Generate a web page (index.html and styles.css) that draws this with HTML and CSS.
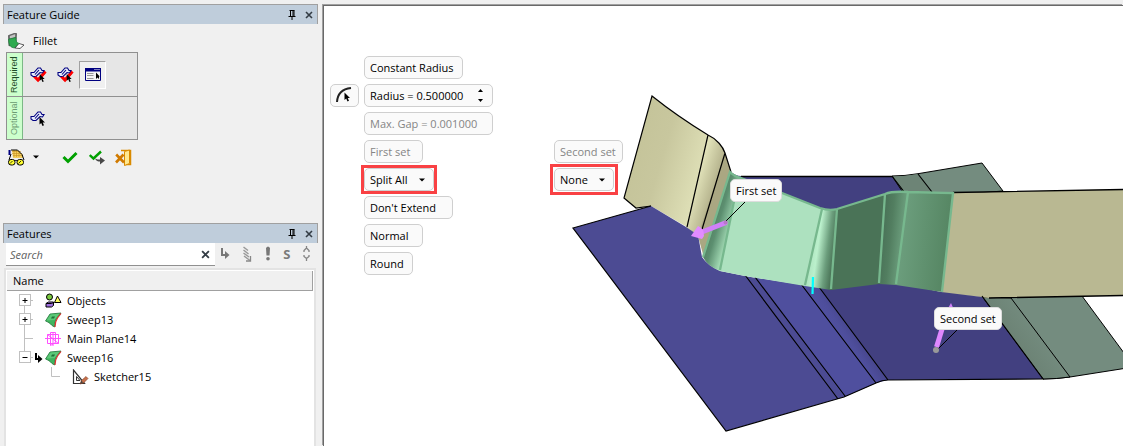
FILE: index.html
```html
<!DOCTYPE html>
<html lang="en">
<head>
<meta charset="utf-8">
<title>Feature Guide</title>
<link rel="stylesheet" href="styles.css">
</head>
<body>
<svg class="defs" aria-hidden="true">
  <symbol id="pin" viewBox="0 0 8 10"><path d="M1.5 0.5H6.500M2.500 0.500V6M5 0.500V6M6 0.500V6M0.500 6.500H7.500M4 7V10" fill="none" stroke="#000"/></symbol>
  <symbol id="cross" viewBox="0 0 8 8"><path d="M1 1L7 7M7 1L1 7" fill="none" stroke="#333c44" stroke-width="1.600"/></symbol>
  <symbol id="caret" viewBox="0 0 6 4"><path d="M0 0.500H6L3 3.500Z" fill="#000"/></symbol>
  <symbol id="face" viewBox="0 0 15 15">
    <path d="M1 6.500H4L8 2H10.500L12 4.500H14L12.500 7L10 6.500L6 10.500H3L1 9ZM5 8.500L9 4" fill="#e8ecfa" stroke="#000080" stroke-width="1.100"/>
  </symbol>
  <symbol id="pick" viewBox="0 0 6 9"><path d="M0.500 0V7.500L2.200 6L3.500 9L5 8.300L3.700 5.500H6Z" fill="#000"/></symbol>
  <symbol id="sweep" viewBox="0 0 17 16">
    <path d="M0.500 9L5 2L16 1L12 6C10 9 9.500 11 9.500 15L7 13.500C5 11 3 10 0.500 9Z" fill="#3fb45e" stroke="#1f7438" stroke-width="0.800"/>
    <path d="M1.500 8.500L5.500 2.600L14.500 1.800L9.500 8Z" fill="#5cc878"/>
    <path d="M7 4.500H10L9 6.500H6Z" fill="#1f7038"/>
    <path d="M16 1.500L12.500 6C10.500 9 10 11 10 15" fill="none" stroke="#e03030" stroke-width="1.200"/>
  </symbol>
</svg>
<div class="app">
  <aside class="sidebar">
    <section class="panel guide">
      <header class="panel-head">
        <h2>Feature Guide</h2>
        <button class="bare" aria-label="Pin"><svg width="8" height="10"><use href="#pin"/></svg></button>
        <button class="bare" aria-label="Close"><svg width="8" height="8"><use href="#cross"/></svg></button>
      </header>
      <div class="feature">
        <svg width="17" height="16" viewBox="0 0 17 16"><path d="M0.500 2.500L6 0.500L8.500 0.500L8 9L1 13Z" fill="#777" stroke="#444" stroke-width="0.700"/><path d="M2 3L7 1.200V4L2 6Z" fill="#c4c4c4"/><path d="M0.700 6L8 4.500C7.800 8 8.500 9.500 11 10.500L7 15C2 14.500 0.500 12 0.700 6Z" fill="#2faa4f" stroke="#1b7636" stroke-width="0.700"/><path d="M11 10.500L16 12L12 15.500L7 15Z" fill="#fff" stroke="#333" stroke-width="0.800"/></svg>
        <span>Fillet</span>
      </div>
      <div class="toolbox">
        <div class="tool-row">
          <div class="tool-label">Required</div>
          <button class="tool" aria-label="First set"><svg width="17" height="17" viewBox="0 0 17 17"><path d="M4 10L8 14L15.500 5.500" fill="none" stroke="#f00" stroke-width="3"/><use href="#face" width="15" height="15"/><path d="M5 11L8 14L14 7.500" fill="none" stroke="#f00" stroke-width="2"/><use href="#pick" x="9" y="8" width="6" height="8"/></svg></button>
          <button class="tool" aria-label="Second set"><svg width="17" height="17" viewBox="0 0 17 17"><path d="M4 10L8 14L15.500 5.500" fill="none" stroke="#f00" stroke-width="3"/><use href="#face" width="15" height="15"/><path d="M5 11L8 14L14 7.500" fill="none" stroke="#f00" stroke-width="2"/><use href="#pick" x="9" y="8" width="6" height="8"/></svg></button>
          <button class="tool pressed" aria-label="Options"><svg width="16" height="14" viewBox="0 0 16 14"><path d="M0.500 0.500H15.500V12.500H0.500Z" fill="#f4f4f4" stroke="#000080"/><path d="M0 0H16V3.500H0Z" fill="#000080"/><path d="M9.500 1.500H10.500M11.500 1.500H12.500M13.500 1.500H14.500" stroke="#fff"/><path d="M2 5.500H8.500M2 7.500H8.500M2 10.500H8.500" stroke="#999"/><path d="M11 4.500V11L12.500 9.500L14 11V8.500H14.800Z" fill="#000"/></svg></button>
        </div>
        <div class="tool-row optional">
          <div class="tool-label">Optional</div>
          <button class="tool" aria-label="Optional faces"><svg width="17" height="17" viewBox="0 0 17 17"><use href="#face" width="15" height="15"/><use href="#pick" x="9" y="7" width="6" height="9"/></svg></button>
        </div>
      </div>
      <div class="actions">
        <button class="bare" aria-label="Preview"><svg width="17" height="17" viewBox="0 0 17 17"><path d="M4 1H9L15 6V9H5Z" fill="#f5d060"/><path d="M4 2.500H13M4 4.500H14M5 6.500H15M6 1V8M8.500 1V8M11 2V8" stroke="#c89020" stroke-width="0.600"/><path d="M1.500 1V6" stroke="#000080" stroke-width="2"/><path d="M3 1H9.500L14 5.500L16 11M3 5L1 11" fill="none" stroke="#000"/><rect x="0.500" y="10.500" width="6.500" height="5.500" rx="2.500" fill="#ffff30" stroke="#000"/><rect x="9" y="10.500" width="6.500" height="5.500" rx="2.500" fill="#ffff30" stroke="#000"/><path d="M7 12L8 11L9 12M2 14.500L4.500 12M10.500 14.500L13 12" fill="none" stroke="#000" stroke-width="0.800"/></svg></button>
        <button class="bare drop" aria-label="Preview options"><svg width="6" height="4"><use href="#caret"/></svg></button>
        <button class="bare ok" aria-label="OK"><svg width="16" height="13" viewBox="0 0 16 13"><path d="M1.500 6L6 10.500L14.500 2" fill="none" stroke="#00a000" stroke-width="3"/></svg></button>
        <button class="bare" aria-label="Apply"><svg width="16" height="15" viewBox="0 0 16 15"><path d="M0.800 5L4.500 8.500L12 1.500" fill="none" stroke="#00a000" stroke-width="2.400"/><path d="M6 8.500C7 11 9 11.500 11 11.500V14.500L16 10.500L11 7V9.500C9 9.500 8 9.500 6 8.500Z" fill="#484848"/></svg></button>
        <button class="bare" aria-label="Cancel"><svg width="17" height="17" viewBox="0 0 17 17"><path d="M6 1.500H15.500V15.500H9" fill="none" stroke="#d98a00" stroke-width="1.500"/><path d="M9.500 2.500L14.500 1V14.500L9.500 16.500Z" fill="#ffe890" stroke="#d98a00"/><path d="M1.200 5.500L9 13.500M8.500 5.500L1 13.500" stroke="#d07a00" stroke-width="2.600"/></svg></button>
      </div>
    </section>

    <section class="panel features">
      <header class="panel-head">
        <h2>Features</h2>
        <button class="bare" aria-label="Pin"><svg width="8" height="10"><use href="#pin"/></svg></button>
        <button class="bare" aria-label="Close"><svg width="8" height="8"><use href="#cross"/></svg></button>
      </header>
      <div class="search-row">
        <div class="search">
          <input type="text" placeholder="Search" aria-label="Search features">
          <button class="bare" aria-label="Clear search"><svg width="9" height="9" viewBox="0 0 8 8"><use href="#cross"/></svg></button>
        </div>
        <div class="filters">
          <button class="bare" aria-label="Dependents"><svg width="10" height="13" viewBox="0 0 10 13"><path d="M2 1V8H6" fill="none" stroke="#777" stroke-width="2"/><path d="M5 4L9.500 8L5 12Z" fill="#777"/></svg></button>
          <button class="bare" aria-label="Order"><svg width="10" height="16" viewBox="0 0 10 16"><path d="M1.500 1L6 4.500M1.500 4L6.500 8M1.500 7L7 11M2 10L8 14.500" stroke="#999" stroke-width="1.500"/><path d="M8.500 10V15H4" fill="none" stroke="#888" stroke-width="1.300"/></svg></button>
          <button class="bare" aria-label="Warnings"><svg width="6" height="15" viewBox="0 0 6 15"><path d="M1 2Q3 -1 5 2L4.500 9.500H1.500Z" fill="#777"/><circle cx="3" cy="12.800" r="1.800" fill="#777"/></svg></button>
          <button class="bare letter" aria-label="Suppressed">S</button>
          <button class="bare" aria-label="Expand"><svg width="7" height="15" viewBox="0 0 7 15"><path d="M3.500 0V2M1 6V4.500L3.500 2L6 4.500V6M3.500 15V12.500M1 9V10.500L3.500 12.500L6 10.500V9" fill="none" stroke="#858585" stroke-width="1.300"/></svg></button>
        </div>
      </div>
      <div class="list">
        <div class="list-head">Name</div>
        <ul class="tree">
          <li class="row"><svg class="guide-line" width="38" height="19"><path d="M5.500 12V19M11 9.500H14" stroke="#c0c0c0"/><rect x="0.500" y="3.500" width="11" height="11" fill="#fff" stroke="#c0c0c0"/><path d="M3.500 9.500H8.500M6 7V12" stroke="#000"/></svg>
            <svg width="17" height="16" viewBox="0 0 17 16"><circle cx="4.500" cy="4" r="3" fill="#79c940" stroke="#000"/><path d="M12.500 3L16 9.500H9.500Z" fill="#ffff60" stroke="#000"/><path d="M1 10.500L3.500 9H8.500V12.500L6.500 14H1Z" fill="#a070e0" stroke="#000"/><path d="M1 10.500H6.500L8.500 9.500" fill="none" stroke="#000"/></svg><span>Objects</span></li>
          <li class="row"><svg class="guide-line" width="38" height="19"><path d="M5.500 0V19M11 9.500H14" stroke="#c0c0c0"/><rect x="0.500" y="3.500" width="11" height="11" fill="#fff" stroke="#c0c0c0"/><path d="M3.500 9.500H8.500M6 7V12" stroke="#000"/></svg>
            <svg width="17" height="16"><use href="#sweep"/></svg><span>Sweep13</span></li>
          <li class="row"><svg class="guide-line" width="38" height="19"><path d="M5.500 0V19M5.500 9.500H14" fill="none" stroke="#c0c0c0"/></svg>
            <svg width="17" height="16" viewBox="0 0 17 16"><path d="M2.500 3.500H13.500V12.500H2.500ZM5.500 1.500V14.500L10.500 11.500V1.500ZM0 7.500H16M8 1V15M2.500 3.500L13.500 12.500" fill="none" stroke="#ff50ff"/></svg><span>Main Plane14</span></li>
          <li class="row"><svg class="guide-line" width="38" height="19"><path d="M5.500 0V9M11 9.500H14" stroke="#c0c0c0"/><rect x="0.500" y="3.500" width="11" height="11" fill="#fff" stroke="#c0c0c0"/><path d="M3.500 9.500H8.500" stroke="#000"/><path d="M17 5V11H20" fill="none" stroke="#000" stroke-width="2"/><path d="M19 7L23.500 11L19 15Z" fill="#000"/></svg>
            <svg width="17" height="16"><use href="#sweep"/></svg><span>Sweep16</span></li>
          <li class="row"><svg class="guide-line" width="65" height="19"><path d="M32.500 0V9.500H41" fill="none" stroke="#c0c0c0"/></svg>
            <svg width="17" height="16" viewBox="0 0 17 16"><path d="M1.500 1V14.500H12.500Z" fill="#fff" stroke="#333" stroke-width="1.200"/><path d="M4.500 7.500V11.500H8Z" fill="none" stroke="#333"/><path d="M8 15L9.500 11.500L14 7.500L16 9.500L11.500 14Z" fill="#c8704a" stroke="#7a3a20" stroke-width="0.600"/><path d="M8 15L9.500 11.500L11 13.500Z" fill="#444"/></svg><span>Sketcher15</span></li>
        </ul>
      </div>
    </section>
  </aside>

  <main class="viewport">
    <svg class="scene" width="799" height="440" viewBox="324 6 799 440" role="img" aria-label="Fillet preview model">
      <defs>
        <linearGradient id="tanA" gradientUnits="userSpaceOnUse" x1="635" y1="150" x2="702" y2="170"><stop offset="0" stop-color="#c5c49a"/><stop offset="0.400" stop-color="#c8c79e"/><stop offset="1" stop-color="#dedfb6"/></linearGradient>
        <linearGradient id="tanB" gradientUnits="userSpaceOnUse" x1="694" y1="190" x2="717" y2="197"><stop offset="0" stop-color="#e0e1b8"/><stop offset="1" stop-color="#aaa782"/></linearGradient>
        <linearGradient id="blueFold" gradientUnits="userSpaceOnUse" x1="830" y1="325" x2="851" y2="311"><stop offset="0" stop-color="#5050a0"/><stop offset="0.300" stop-color="#4e4e9c"/><stop offset="1" stop-color="#424080"/></linearGradient>
        <linearGradient id="g1" gradientUnits="userSpaceOnUse" x1="714" y1="220" x2="731" y2="225"><stop offset="0" stop-color="#558466"/><stop offset="0.300" stop-color="#5c8f70"/><stop offset="1" stop-color="#a0d8b2"/></linearGradient>
        <linearGradient id="g3" gradientUnits="userSpaceOnUse" x1="812" y1="248" x2="834" y2="251"><stop offset="0" stop-color="#b0e6c2"/><stop offset="0.250" stop-color="#bbf0cc"/><stop offset="0.700" stop-color="#6b9d7c"/><stop offset="1" stop-color="#4c7659"/></linearGradient>
        <linearGradient id="g5" gradientUnits="userSpaceOnUse" x1="882" y1="240" x2="902" y2="242"><stop offset="0" stop-color="#4a7358"/><stop offset="0.400" stop-color="#527e60"/><stop offset="1" stop-color="#6b9d7c"/></linearGradient>
        <linearGradient id="g6" gradientUnits="userSpaceOnUse" x1="902" y1="240" x2="948" y2="245"><stop offset="0" stop-color="#6b9d7c"/><stop offset="1" stop-color="#568663"/></linearGradient>
        <linearGradient id="gray" gradientUnits="userSpaceOnUse" x1="1010" y1="350" x2="1040" y2="328"><stop offset="0" stop-color="#6a8072"/><stop offset="1" stop-color="#748c7f"/></linearGradient>
      </defs>
      <path d="M652 96C672 112 690 124 708 135L687 227L651 206L636 208L624 198Z" fill="url(#tanA)"/>
      <path d="M708 135C717 139 723 147 725 153L702 230L698 236L686 228Z" fill="url(#tanB)"/>
      <path d="M725 153L731 172L704 258L698 236Z" fill="#aaa782"/>
      <path d="M651 206L636 208L624 198L652 96C672 112 690 124 708 135C717 139 723 147 725 153L731 172M708 135L687 227M725 153L700 236" fill="none" stroke="#000" stroke-width="1.200"/>
      <path d="M731 172Q736 176 741 176H892L905 194L885 200L830 220L735 190Z" fill="#424080"/>
      <path d="M741 176.500H892" stroke="#000" stroke-width="1.500"/>
      <path d="M892 176Q905 176 918 173.700L982 163L1003 191L953 195L904 194Z" fill="#748c7f" stroke="#000"/>
      <path d="M893 176.500Q906 176 918 174L932 192H904Z" fill="#6d8476"/>
      <path d="M892 176L905 193M918 174L932 192" stroke="#000" stroke-width="1.200"/>
      <path d="M982 297L1082 296L1124 353V368.500L1070 377Q1056 379 1043 379Z" fill="#748c7f" stroke="#000"/>
      <path d="M982 297L1011 298L1070 377Q1056 379 1043 379Z" fill="url(#gray)" stroke="#000"/>
      <path d="M953 193L1124 189V295.500L989 298L941 293Z" fill="#b9b892"/>
      <path d="M953 192.500L1124 189.500M989 298L1124 295.500" stroke="#000" stroke-width="1.300"/>
      <path d="M573 228L651 206L686 227L698 235L702 257Q707 265 720 271L745 276L805 286L819 287L876 383L844 397L837 399L726 431Z" fill="#4c4b93"/>
      <path d="M755 278L805 285L876 383L844 397Z" fill="#4f4f9e"/>
      <path d="M801 282L832 284L888 380L876 383Z" fill="url(#blueFold)"/>
      <path d="M819 286L832 289L880 282L900 283L941 292L982 297L1043 379L888 380Z" fill="#424080"/>
      <path d="M651 206L573 228L726 431L837 399L844 397L876 383Q882 380 888 380L1043 379L982 296M745 275L838 399M755 277L845 396M801 284L876 383M819 287L888 380" fill="none" stroke="#000" stroke-width="1.200"/>
      <path d="M730 172L740 177L720 271Q707 266 703 257Z" fill="url(#g1)"/>
      <path d="M740 177L782 193L822 209L805 286L745 276L720 271Z" fill="#ade1bf"/>
      <path d="M822 209Q830 211 837 209L831 290L818 288L805 286Z" fill="url(#g3)"/>
      <path d="M837 209L885 194L879 284L831 290Z" fill="#4a7357"/>
      <path d="M885 194Q894 191 908 192L896 285L879 284Z" fill="url(#g5)"/>
      <path d="M908 192L953 193L942 292L896 285Z" fill="url(#g6)"/>
      <path d="M703 257L730 172Q735 177 741 178L782 193L820 208Q829 211 837 209L885 194Q892 191 908 192L953 193L942 292M739 177L720 270M822 209L805 285M837 209L831 289M885 194L879 283M908 192L896 284" fill="none" stroke="#77b88e" stroke-width="2.300"/>
      <path d="M813 277L812.500 294" stroke="#0ff" stroke-width="2.200"/>
      <path d="M748 199L725 222M960 327L938 349" stroke="#000"/>
      <path d="M725 223L702 232" stroke="#d080f8" stroke-width="5" stroke-linecap="round"/>
      <path d="M691 236L698 226Q704 228 704 236L702 239Z" fill="#e28cff"/>
      <circle cx="725.500" cy="222.500" r="2" fill="#b878c8"/>
      <path d="M951 303L955 312H946Z" fill="#d080f8"/>
      <path d="M943 326L936.500 347" stroke="#df88ff" stroke-width="5"/>
      <circle cx="936" cy="350" r="3" fill="#999"/>
    </svg>
    <div class="tag tag-first">First set</div>
    <div class="tag tag-second">Second set</div>

    <form class="options">
      <button type="button" class="chip c2 w-mode">Constant Radius</button>
      <button type="button" class="chip c1 icon-chip" aria-label="Pick radius"><svg width="19" height="19" viewBox="0 0 19 19"><path d="M2 16C2.500 8 7 3 16 2" fill="none" stroke="#222" stroke-width="2"/><use href="#pick" x="9" y="6" width="6" height="10"/></svg></button>
      <div class="chip c2 spin">
        <input type="text" value="Radius = 0.500000" aria-label="Radius">
        <span class="steps">
          <button type="button" class="bare" aria-label="Increase"><svg width="5" height="3"><path d="M0 3H5L2.500 0Z"/></svg></button>
          <button type="button" class="bare" aria-label="Decrease"><svg width="5" height="3"><path d="M0 0H5L2.500 3Z"/></svg></button>
        </span>
      </div>
      <input class="chip c2 gap-field" type="text" value="Max. Gap = 0.001000" aria-label="Max. Gap" disabled>
      <button type="button" class="chip c2 w-60" disabled>First set</button>
      <button type="button" class="chip c3 w-70" disabled>Second set</button>
      <div class="c2 pick-box split"><select class="chip" aria-label="First set trimming"><option>Split All</option></select><svg class="arrow" width="6" height="4"><use href="#caret"/></svg></div>
      <div class="c3 pick-box none"><select class="chip" aria-label="Second set trimming"><option>None</option></select><svg class="arrow" width="6" height="4"><use href="#caret"/></svg></div>
      <button type="button" class="chip c2 w-90">Don't Extend</button>
      <button type="button" class="chip c2 w-60">Normal</button>
      <button type="button" class="chip c2 w-50">Round</button>
    </form>
  </main>
</div>
</body>
</html>
```
FILE: styles.css
```css
* { box-sizing: border-box; }
html, body { height: 100%; }
body { margin: 0; background: #f0f0f0; color: #000; font: 11px/16px "Open Sans", "Noto Sans", sans-serif; overflow: hidden; }
svg { display: block; flex: none; }
button, input, select { font: inherit; color: inherit; margin: 0; }
.defs { position: absolute; width: 0; height: 0; }
.bare { border: 0; padding: 0; background: none; display: flex; align-items: center; justify-content: center; }

.app { display: flex; height: 100vh; padding-top: 4px; gap: 5px; }
.sidebar { flex: none; width: 318px; padding-left: 3px; display: flex; flex-direction: column; }
.panel-head { display: flex; align-items: center; gap: 9px; height: 20px; padding: 0 4px 0 3px; background: #bfcddb; border: 1px solid #a0a0a0; border-bottom: 0; }
.panel-head h2 { flex: 1; margin: 0; font-size: 11px; font-weight: 400; }

.guide { height: 219px; flex: none; }
.feature { display: flex; align-items: center; gap: 8px; height: 28px; padding: 6px 5px 0; }
.feature span { font-size: 11px; }
.toolbox { width: 132px; margin-left: 3px; border: 1px solid #909090; background: #e6e6e6; }
.tool-row { display: flex; align-items: center; height: 43px; padding-right: 8px; }
.optional { border-top: 1px solid #909090; }
.tool-label { align-self: stretch; width: 16px; margin-right: 2px; background: #cfc; border-left: 1px solid #7cb886; writing-mode: vertical-rl; transform: rotate(180deg); text-align: center; font: 9px/15px "Liberation Sans", sans-serif; color: #1c4a24; }
.optional .tool-label { color: #6c9a72; }
.tool { width: 27px; height: 28px; border: 1px solid transparent; padding: 0; background: none; display: flex; align-items: center; justify-content: center; }
.pressed { background: #f0f0f0; border-color: #a0a0a0 #fff #fff #a0a0a0; }
.actions { display: flex; align-items: center; height: 34px; padding-left: 5px; gap: 10px; }
.drop { margin-left: -2px; }
.ok { margin: 0 1px 0 13px; }

.features { flex: 1; display: flex; flex-direction: column; min-height: 0; }
.search-row { display: flex; padding: 0 3px; height: 23px; margin-bottom: 2px; flex: none; }
.search { flex: 1; display: flex; align-items: center; background: #fff; border-bottom: 1px solid #909090; padding-right: 5px; }
.search input { flex: 1; min-width: 0; border: 0; background: none; outline: 0; padding: 0 4px; font-style: italic; height: 20px; }
.search input::placeholder { color: #606060; }
.filters { display: flex; align-items: center; justify-content: space-between; width: 100px; padding: 0 5px 2px 5px; }
.letter { font-weight: 700; color: #7a7a7a; font-size: 13px; }
.list { flex: 1; min-height: 0; margin: 0 2px 0 1px; background: #fff; border: 2px solid #e3e3e3; border-bottom: 0; padding: 1px 1px 0; }
.list-head { height: 20px; line-height: 20px; padding-left: 6px; background: #f0f0f0; border: solid #a0a0a0; border-width: 0 1px 1px 0; }
.tree { list-style: none; margin: 0; padding: 0 0 0 12px; }
.row { display: flex; align-items: center; height: 19px; white-space: nowrap; }
.row span { margin-left: 5px; }
.guide-line { margin-right: -12px; }
.row .guide-line + svg { position: relative; }

.viewport { flex: 1; min-width: 0; margin-top: 1px; position: relative; overflow: hidden; background: #fff; border: solid #696969; border-width: 1px 0 0 1px; box-shadow: -1px -1px 0 #a0a0a0; }
.scene { position: absolute; left: 0; top: 0; }
.tag { position: absolute; height: 23px; padding: 0 5px; border: 1px solid #ddd; border-radius: 5px; background: #fafafa; line-height: 21px; white-space: nowrap; }
.tag-first { left: 406px; top: 173px; }
.tag-second { left: 610px; top: 301px; }

.options { position: relative; display: grid; grid-template-columns: 28px 184px 80px; column-gap: 6px; row-gap: 5px; grid-auto-rows: 23px; padding: 50px 0 0 6px; align-items: center; justify-items: start; width: max-content; }
.c1 { grid-column: 1; }
.c2 { grid-column: 2; }
.c3 { grid-column: 3; }
.chip { height: 23px; padding: 0 5px; border: 1px solid #cfcfcf; border-radius: 5px; background: #fafafa; text-align: left; line-height: 20px; white-space: nowrap; }
.chip:disabled { color: #858585; opacity: 1; }
.icon-chip { width: 29px; display: flex; align-items: center; justify-content: center; grid-row: 2; }
.w-mode { width: 99px; }
.w-90 { width: 89px; }
.w-70 { width: 69px; }
.w-60 { width: 59px; }
.w-50 { width: 49px; }
.spin { display: flex; align-items: center; width: 129px; padding-right: 9px; grid-row: 2; }
.spin input { flex: 1; min-width: 0; border: 0; padding: 0; background: none; outline: 0; height: 20px; }
.steps { display: flex; flex-direction: column; gap: 7px; }
.gap-field { width: 129px; }
.pick-box { position: relative; outline: 3px solid #f94144; }
.pick-box .chip { appearance: none; display: block; width: 100%; }
.split { width: 70px; }
.none { width: 60px; outline-offset: 1px; }
.arrow { position: absolute; right: 9px; top: 10px; pointer-events: none; }
```
